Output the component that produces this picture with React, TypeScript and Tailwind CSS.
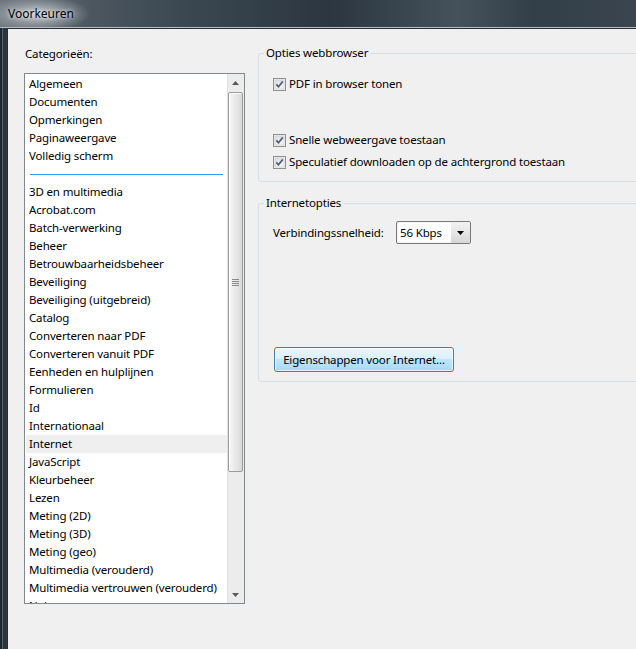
import { Fragment } from 'react';

const categories: (string | null)[] = [
    'Algemeen',
    'Documenten',
    'Opmerkingen',
    'Paginaweergave',
    'Volledig scherm',
    null,
    '3D en multimedia',
    'Acrobat.com',
    'Batch-verwerking',
    'Beheer',
    'Betrouwbaarheidsbeheer',
    'Beveiliging',
    'Beveiliging (uitgebreid)',
    'Catalog',
    'Converteren naar PDF',
    'Converteren vanuit PDF',
    'Eenheden en hulplijnen',
    'Formulieren',
    'Id',
    'Internationaal',
    'Internet',
    'JavaScript',
    'Kleurbeheer',
    'Lezen',
    'Meting (2D)',
    'Meting (3D)',
    'Meting (geo)',
    'Multimedia (verouderd)',
    'Multimedia vertrouwen (verouderd)',
    'Nalezen',
];

function CheckBox() {
    return (
        <svg width="13" height="13" viewBox="0 0 13 13" className="shrink-0">
            <defs>
                <linearGradient id="cbg" x1="0" y1="0" x2="1" y2="1">
                    <stop offset="0" stopColor="#dcdcdc" />
                    <stop offset="1" stopColor="#fbfbfb" />
                </linearGradient>
            </defs>
            <rect x="0.5" y="0.5" width="12" height="12" fill="#f4f4f4" stroke="#8e8f8f" />
            <rect x="2" y="2" width="9" height="9" fill="url(#cbg)" stroke="#c6c6c6" strokeWidth="0.6" />
            <path d="M3.3 6.4 L5.5 8.8 L9.8 3.4" fill="none" stroke="#4c5f88" strokeWidth="1.7" />
        </svg>
    );
}

function ArrowGlyph({ up }: { up?: boolean }) {
    return (
        <svg width="7" height="4" viewBox="0 0 7 4">
            <path d={up ? 'M0 4 L3.5 0 L7 4 Z' : 'M0 0 L7 0 L3.5 4 Z'} fill="#5a5a5a" />
        </svg>
    );
}

function CategoryList() {
    return (
        <div className="flex h-[531px] w-[221px] overflow-hidden border border-[#828790] bg-white">
            <div className="w-[202px] pt-[1px]">
                {categories.map((name, i) => (
                    <Fragment key={i}>
                        {name === null ? (
                            <div className="flex h-[18px] items-center pl-[5px] pr-[4px]">
                                <div className="h-px w-full bg-[#3399ff]" />
                            </div>
                        ) : (
                            <div
                                className={`ml-[1px] flex h-[18px] items-center whitespace-nowrap pl-[3px] text-black ${
                                    name === 'Internet' ? 'bg-[#efefef]' : ''
                                }`}
                            >
                                {name}
                            </div>
                        )}
                    </Fragment>
                ))}
            </div>
            <div className="flex w-[17px] flex-col bg-[#ececec] shadow-[inset_1px_0_0_#e2e2e2]">
                <div className="flex h-[18px] items-center justify-center">
                    <ArrowGlyph up />
                </div>
                <div className="flex-1 pb-[114px] pl-[1px] pr-[1px]">
                    <div className="flex h-full flex-col items-center justify-center rounded-[2px] border border-[#9b9b9b] bg-[linear-gradient(90deg,#f6f6f6,#e9e9e9_50%,#d9d9d9)] shadow-[inset_1px_1px_0_#fff]">
                        <div className="flex flex-col gap-[1px]">
                            <div className="h-px w-[7px] bg-[#8a8a8a]" />
                            <div className="h-px w-[7px] bg-[#8a8a8a]" />
                            <div className="h-px w-[7px] bg-[#8a8a8a]" />
                            <div className="h-px w-[7px] bg-[#8a8a8a]" />
                        </div>
                    </div>
                </div>
                <div className="flex h-[17px] items-center justify-center">
                    <ArrowGlyph />
                </div>
            </div>
        </div>
    );
}

function CheckRow({ label, className = '' }: { label: string; className?: string }) {
    return (
        <div className={`flex h-[22px] items-center ${className}`}>
            <CheckBox />
            <span className="ml-[3px] whitespace-nowrap text-black">{label}</span>
        </div>
    );
}

export default function App() {
    return (
        <div className="flex h-[649px] w-[636px] flex-col overflow-hidden bg-[#f0f0f0] font-['Segoe_UI','Noto_Sans',sans-serif] text-[11.5px] leading-[16px] tracking-[-0.15px]">
            {/* title bar */}
            <div className="flex h-[27px] shrink-0 items-center bg-[image:radial-gradient(ellipse_52px_18px_at_38px_14px,rgba(210,215,219,0.9),rgba(170,177,183,0.5)_60%,rgba(120,128,135,0)),linear-gradient(90deg,#6f787f_0%,#4c5760_14%,#3a4650_30%,#2b3640_52%,#3a4650_64%,#46525b_72%,#323e48_84%,#3a4550_100%)] pl-[8px] pt-[1px] text-[12px] tracking-normal text-black">
                <span className="[text-shadow:0_0_4px_#fff]">Voorkeuren</span>
            </div>
            <div className="h-px shrink-0 bg-[#b8bec3]" />
            <div className="flex min-h-0 flex-1">
                {/* left window frame */}
                <div className="w-[7px] shrink-0 border-l-2 border-l-[#1e2830] bg-[#2a353e] shadow-[inset_1px_0_0_#58636c]" />
                <div className="flex min-w-0 flex-1 border-l border-t border-[#262e35] bg-[#f0f0f0]">
                    {/* categories */}
                    <div className="ml-[16px] flex shrink-0 flex-col pt-[17px]">
                        <div className="pl-[1px] text-black">Categorieën:</div>
                        <div className="mt-[11px]">
                            <CategoryList />
                        </div>
                    </div>

                    {/* options */}
                    <div className="ml-[13px] flex w-[420px] shrink-0 flex-col pt-[16px]">
                        <fieldset className="rounded-[3px] border border-[#d5dfe5] pb-[8px] pl-[5px] pt-[12px]">
                            <legend className="px-[2px] text-black">Opties webbrowser</legend>
                            <div className="pl-[9px]">
                                <CheckRow label="PDF in browser tonen" />
                                <CheckRow label="Snelle webweergave toestaan" className="mt-[34px]" />
                                <CheckRow label="Speculatief downloaden op de achtergrond toestaan" />
                            </div>
                        </fieldset>

                        <fieldset className="mt-[13px] rounded-[3px] border border-[#d5dfe5] pb-[9px] pl-[5px] pt-[10px]">
                            <legend className="px-[2px] text-black">Internetopties</legend>
                            <div className="pl-[9px]">
                                <div className="flex h-[23px] items-center">
                                    <span className="w-[123px] whitespace-nowrap text-black">Verbindingssnelheid:</span>
                                    <div className="flex h-[23px] w-[75px] rounded-[2px] border border-[#7a7a7a] bg-white shadow-[inset_0_0_0_1px_#f4f4f4]">
                                        <div className="flex flex-1 items-center pl-[3px] text-black">56 Kbps</div>
                                        <div className="flex w-[19px] items-center justify-center rounded-r-[1px] bg-[linear-gradient(180deg,#f2f2f2,#e6e6e6_50%,#d6d6d6)]">
                                            <svg width="7" height="4" viewBox="0 0 7 4">
                                                <path d="M0 0 L7 0 L3.5 4 Z" fill="#000" />
                                            </svg>
                                        </div>
                                    </div>
                                </div>
                                <button className="ml-[1px] mt-[103px] flex h-[25px] w-[180px] items-center justify-center rounded-[3px] border border-[#3c7fb1] bg-[linear-gradient(180deg,#eaf6fd_0%,#d9f0fc_50%,#bee6fd_50%,#a7d9f5_100%)] text-black shadow-[inset_0_0_0_1px_rgba(255,255,255,0.7)]">
                                    Eigenschappen voor Internet...
                                </button>
                            </div>
                        </fieldset>
                    </div>
                </div>
            </div>
        </div>
    );
}
